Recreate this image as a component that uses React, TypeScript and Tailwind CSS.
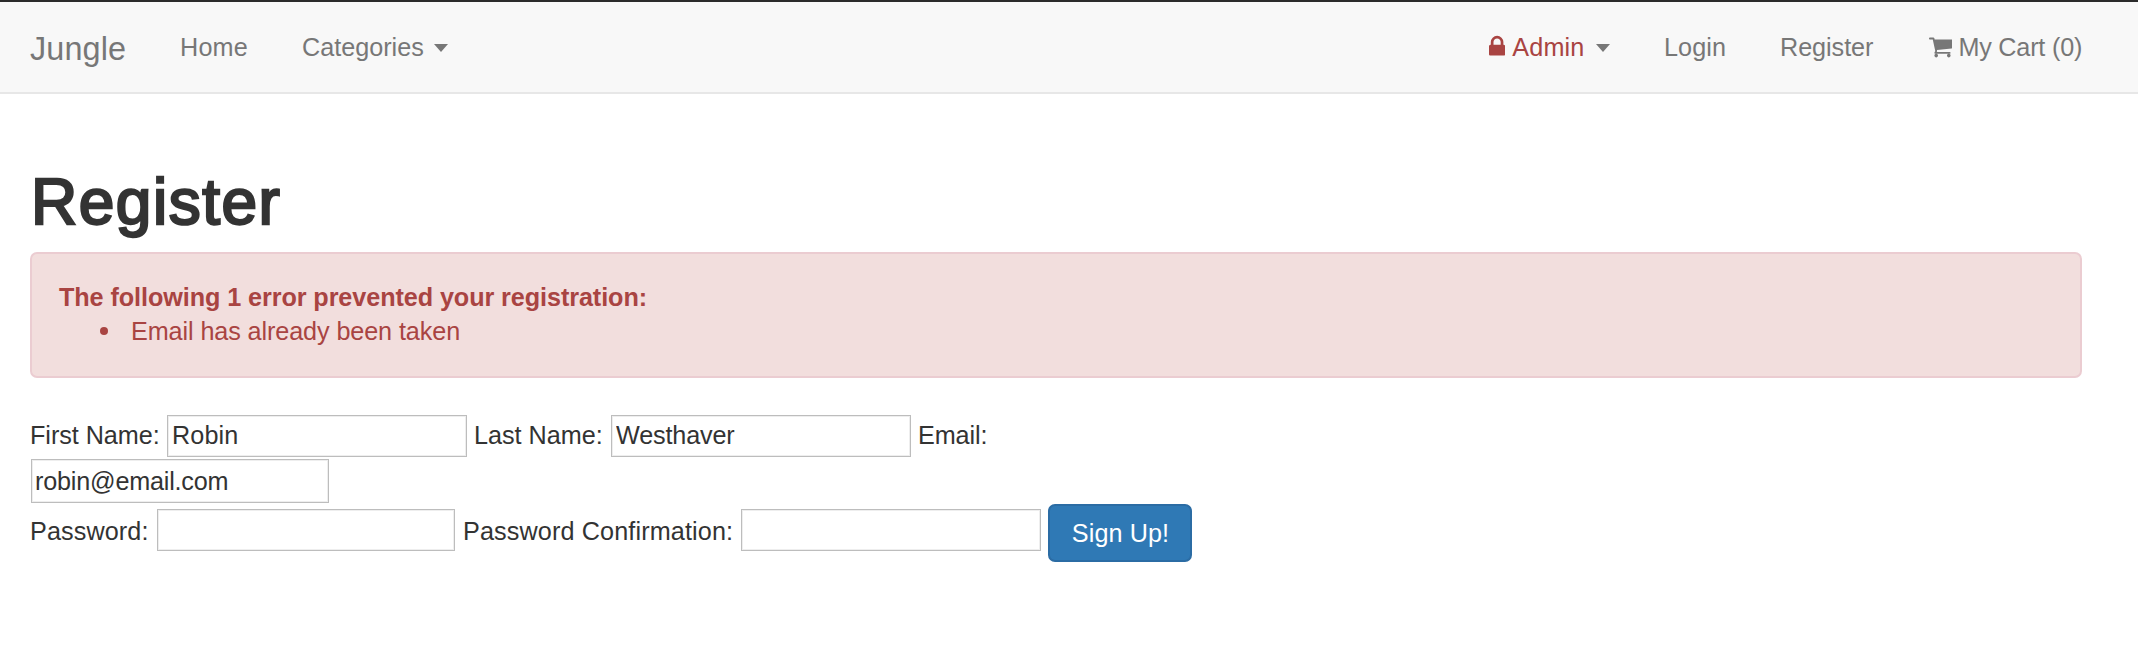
import React from "react";

function LockIcon() {
  return (
    <svg viewBox="0 0 1152 1792" className="h-[25.2px] w-[16.2px] shrink-0" fill="currentColor" aria-hidden="true">
      <path d="M320 768h512v-192q0 -106 -75 -181t-181 -75t-181 75t-75 181v192zM1152 864v576q0 40 -28 68t-68 28h-960q-40 0 -68 -28t-28 -68v-576q0 -40 28 -68t68 -28h32v-192q0 -184 132 -316t316 -132t316 132t132 316v192h32q40 0 68 28t28 68z" />
    </svg>
  );
}

function CartIcon() {
  return (
    <svg viewBox="0 0 1664 1792" className="h-[25.2px] w-[23.4px] shrink-0" fill="currentColor" aria-hidden="true">
      <path d="M640 1536q0 52-38 90t-90 38-90-38-38-90 38-90 90-38 90 38 38 90zm896 0q0 52-38 90t-90 38-90-38-38-90 38-90 90-38 90 38 38 90zm128-1088v512q0 24-16.5 42.5t-40.5 21.5l-1044 122q13 60 13 70 0 16-24 64h920q26 0 45 19t19 45-19 45-45 19h-1024q-26 0-45-19t-19-45q0-11 8-31.5t16-36 21.5-40 15.5-29.5l-177-823h-204q-26 0-45-19t-19-45 19-45 45-19h256q16 0 28.5 6.5t19.5 15.5 13 24.5 8 26 5.5 29.5 4.5 26h1201q26 0 45 19t19 45z" />
    </svg>
  );
}

function Caret() {
  return (
    <svg viewBox="0 0 14 8" className="mt-[15px] h-[8px] w-[14px] shrink-0" fill="#777777" aria-hidden="true">
      <path d="M0 0h14L7 8z" />
    </svg>
  );
}

const field =
  "h-[42px] shrink-0 rounded-none border border-[#bdbdbd] bg-white pb-[1px] shadow-[inset_0_0_0_1px_#eeeeee] outline-none";

export default function App() {
  return (
    <div className="h-[650px] w-[2138px] overflow-hidden bg-white font-['Liberation_Sans',Arial,sans-serif] text-[25.2px] leading-[36px] whitespace-nowrap text-[#333333]">
      <nav className="flex h-[94px] items-start border-t-2 border-b-2 border-t-[#2b2b2b] border-b-[#e7e7e7] bg-[#f8f8f8] pt-[27px] pl-[30px] text-[#777777]">
        <a className="mt-[2px] w-[150px] tracking-[0.1px] text-[32.4px]">Jungle</a>
        <a className="w-[122px] tracking-[0.2px]">Home</a>
        <a className="w-[132px] tracking-[0px]">Categories</a>
        <Caret />
        <div className="ml-[1041px] flex w-[107px] text-[#a94442]">
          <span className="pt-[5px]"><LockIcon /></span>
          <span className="ml-[7px] tracking-[0.2px]">Admin</span>
        </div>
        <Caret />
        <a className="ml-[54px] w-[116px] tracking-[0.1px]">Login</a>
        <a className="w-[149px] tracking-[-0.05px]">Register</a>
        <a className="flex">
          <span className="pt-[5px]"><CartIcon /></span>
          <span className="ml-[6px] tracking-[-0.2px]">My Cart (0)</span>
        </a>
      </nav>

      <main className="pl-[30px]">
        <h1 className="mt-[72px] h-[86px] pl-[1px] text-[64px] leading-[72px] font-normal tracking-[1.5px] [-webkit-text-stroke:2.4px_#333333]">Register</h1>

        <section className="h-[126px] w-[2052px] rounded-[7px] border-2 border-[#ebccd1] bg-[#f2dedd] pt-[26px] pl-[27px] leading-[34px] text-[#a94442]">
          <strong className="block tracking-[-0.08px]">The following 1 error prevented your registration:</strong>
          <ul>
            <li className="flex items-center">
              <span className="ml-[41px] size-[8px] rounded-full bg-[#a94442]" />
              <span className="ml-[23px] tracking-[-0.1px]">Email has already been taken</span>
            </li>
          </ul>
        </section>

        <form className="mt-[37px]" onSubmit={(e) => e.preventDefault()}>
          <div className="flex h-[44px]">
            <label className="w-[137px] pt-[2px] tracking-[-0.05px]">First Name:</label>
            <input className={field + " w-[300px] pl-[4px] tracking-[0.1px]"} defaultValue="Robin" />
            <label className="ml-[7px] w-[137px] pt-[2px] tracking-[0px]">Last Name:</label>
            <input className={field + " w-[300px] pl-[4px] tracking-[-0.15px]"} defaultValue="Westhaver" />
            <label className="ml-[7px] pt-[2px] tracking-[-0.1px]">Email:</label>
          </div>
          <div className="flex h-[45px] pl-[1px]">
            <input className="h-[44px] w-[298px] rounded-none border border-[#bdbdbd] bg-white pl-[3px] tracking-[-0.2px] shadow-[inset_0_0_0_1px_#eeeeee] outline-none" defaultValue="robin@email.com" />
          </div>
          <div className="flex h-[58px]">
            <label className="w-[127px] pt-[9px] tracking-[0.1px]">Password:</label>
            <input type="password" className={field + " mt-[5px] w-[298px]"} />
            <label className="ml-[8px] w-[278px] pt-[9px] tracking-[0.13px]">Password Confirmation:</label>
            <input type="password" className={field + " mt-[5px] w-[300px]"} />
            <button className="ml-[7px] h-[58px] w-[144px] rounded-[7px] border-2 border-[#2b6ca4] bg-[#2f79b5] pl-[1px] tracking-[0.1px] text-white">Sign Up!</button>
          </div>
        </form>
      </main>
    </div>
  );
}
